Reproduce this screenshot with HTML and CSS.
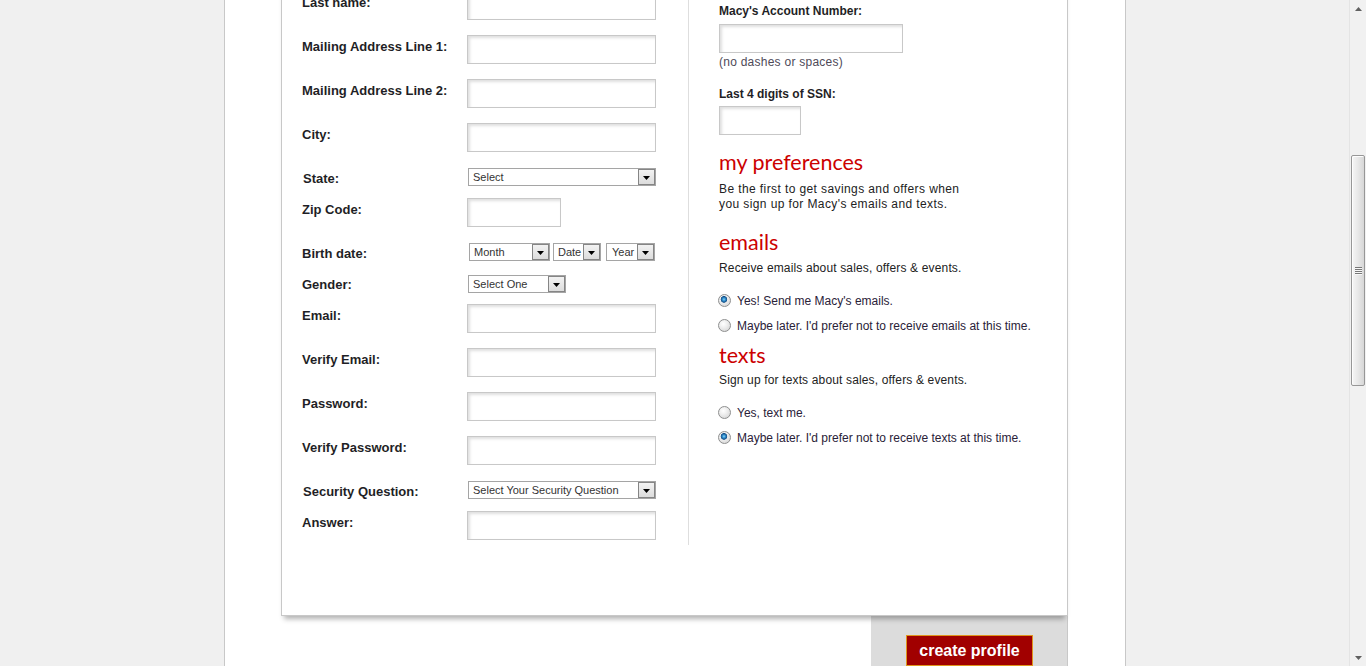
FILE: index.html
```html
<!DOCTYPE html>
<html lang="en">
<head>
<meta charset="utf-8">
<title>Create Profile</title>
<link rel="stylesheet" href="styles.css">
</head>
<body>
<div class="screen">
  <div class="viewport">
    <div class="page">
      <div class="card">
        <div class="col-left">
          <div class="row"><label class="lbl">First name:</label><input class="field" type="text"></div>
          <div class="row mt15"><label class="lbl">Last name:</label><input class="field" type="text"></div>
          <div class="row mt15"><label class="lbl">Mailing Address Line 1:</label><input class="field" type="text"></div>
          <div class="row mt15"><label class="lbl">Mailing Address Line 2:</label><input class="field" type="text"></div>
          <div class="row mt15"><label class="lbl">City:</label><input class="field" type="text"></div>
          <div class="row mt16"><label class="lbl lbl-sel lbl-in">State:</label>
            <div class="sel sel-state"><span class="sel-text">Select</span><span class="sel-arrow"><svg width="7" height="4" viewBox="0 0 7 4"><polygon points="0,0 7,0 3.5,4" fill="#000"/></svg></span></div>
          </div>
          <div class="row mt12"><label class="lbl">Zip Code:</label><input class="field field-zip" type="text"></div>
          <div class="row mt16"><label class="lbl lbl-sel">Birth date:</label>
            <div class="sel sel-month"><span class="sel-text">Month</span><span class="sel-arrow"><svg width="7" height="4" viewBox="0 0 7 4"><polygon points="0,0 7,0 3.5,4" fill="#000"/></svg></span></div>
            <div class="sel sel-date"><span class="sel-text">Date</span><span class="sel-arrow"><svg width="7" height="4" viewBox="0 0 7 4"><polygon points="0,0 7,0 3.5,4" fill="#000"/></svg></span></div>
            <div class="sel sel-year"><span class="sel-text">Year</span><span class="sel-arrow"><svg width="7" height="4" viewBox="0 0 7 4"><polygon points="0,0 7,0 3.5,4" fill="#000"/></svg></span></div>
          </div>
          <div class="row mt14"><label class="lbl lbl-sel lbl-gender">Gender:</label>
            <div class="sel sel-gender"><span class="sel-text">Select One</span><span class="sel-arrow"><svg width="7" height="4" viewBox="0 0 7 4"><polygon points="0,0 7,0 3.5,4" fill="#000"/></svg></span></div>
          </div>
          <div class="row mt11"><label class="lbl">Email:</label><input class="field" type="text"></div>
          <div class="row mt15"><label class="lbl">Verify Email:</label><input class="field" type="text"></div>
          <div class="row mt15"><label class="lbl">Password:</label><input class="field" type="password"></div>
          <div class="row mt15"><label class="lbl">Verify Password:</label><input class="field" type="password"></div>
          <div class="row mt16"><label class="lbl lbl-sel lbl-in">Security Question:</label>
            <div class="sel sel-state"><span class="sel-text">Select Your Security Question</span><span class="sel-arrow"><svg width="7" height="4" viewBox="0 0 7 4"><polygon points="0,0 7,0 3.5,4" fill="#000"/></svg></span></div>
          </div>
          <div class="row mt12"><label class="lbl">Answer:</label><input class="field" type="text"></div>
        </div>
        <div class="col-right">
          <div class="rlbl">Macy's Account Number:</div>
          <input class="field field-acct mt5" type="text">
          <div class="hint mt2">(no dashes or spaces)</div>
          <div class="rlbl mt17">Last 4 digits of SSN:</div>
          <input class="field field-ssn mt4" type="text">
          <h2 class="pref-h mt15">my preferences</h2>
          <p class="pref-p pref-intro mt8">Be the first to get savings and offers when<br>you sign up for Macy's emails and texts.</p>
          <h2 class="pref-h mt18">emails</h2>
          <p class="pref-p mt7">Receive emails about sales, offers &amp; events.</p>
          <label class="radio-row mt18"><input type="radio" name="em" checked><span>Yes! Send me Macy's emails.</span></label>
          <label class="radio-row mt10"><input type="radio" name="em"><span>Maybe later. I'd prefer not to receive emails at this time.</span></label>
          <h2 class="pref-h mt9">texts</h2>
          <p class="pref-p mt6">Sign up for texts about sales, offers &amp; events.</p>
          <label class="radio-row mt18"><input type="radio" name="tx"><span>Yes, text me.</span></label>
          <label class="radio-row mt10"><input type="radio" name="tx" checked><span>Maybe later. I'd prefer not to receive texts at this time.</span></label>
        </div>
      </div>
      <div class="actions">
        <div class="panel"><button class="btn" type="button">create profile</button></div>
      </div>
    </div>
  </div>
  <div class="scrollbar">
    <div class="sb-btn"><svg width="7" height="4" viewBox="0 0 7 4"><polygon points="0,4 7,4 3.5,0" fill="#606060"/></svg></div>
    <div class="sb-thumb"><span class="grip"><i></i><i></i><i></i><i></i></span></div>
    <div class="sb-btn sb-down"><svg width="7" height="4" viewBox="0 0 7 4"><polygon points="0,0 7,0 3.5,4" fill="#606060"/></svg></div>
  </div>
</div>
</body>
</html>
```
FILE: styles.css
```css
* { box-sizing: border-box; }

body {
  margin: 0;
  background: #f0f0f0;
  font-family: "Liberation Sans", Arial, sans-serif;
  color: #222;
}

.screen {
  display: flex;
  height: 666px;
  overflow: hidden;
}

.viewport {
  flex: 1;
  overflow: hidden;
}

.page {
  width: 902px;
  height: 666px;
  margin-left: 224px;
  background: #fff;
  border-left: 1px solid #c8c8c8;
  border-right: 1px solid #c8c8c8;
  display: flex;
  flex-direction: column;
}

.card {
  flex-shrink: 0;
  margin-top: -70px;
  margin-left: 56px;
  width: 787px;
  display: flex;
  background: #fff;
  border: 1px solid #c8c8c8;
  border-top: 0;
  padding-bottom: 70px;
  box-shadow: 0 6px 5px -3px rgba(0, 0, 0, 0.3);
  position: relative;
  z-index: 1;
}

/* left column */
.col-left {
  width: 407px;
  padding: 17px 0 5px 20px;
  border-right: 1px solid #dedede;
}

.row {
  display: flex;
  align-items: flex-start;
}

.lbl {
  width: 165px;
  flex-shrink: 0;
  padding-top: 4px;
  font-size: 13px;
  line-height: 15px;
  font-weight: bold;
  color: #1f1f26;
}

.lbl-sel { padding-top: 3px; }
.lbl-in { padding-left: 1px; }
.lbl-gender { padding-top: 2px; }

.field {
  display: block;
  margin: 0;
  width: 189px;
  height: 29px;
  border: 1px solid #c8c8c8;
  background: #fff;
  box-shadow: inset 2px 2px 3px rgba(0, 0, 0, 0.13);
  font: 12px "Liberation Sans", Arial, sans-serif;
  padding: 0 4px;
  outline: none;
}

.field-zip { width: 94px; }
.field-acct { width: 184px; }
.field-ssn { width: 82px; }

/* select boxes */
.sel {
  display: flex;
  height: 18px;
  border: 1px solid #a5a5a5;
  background: #fff;
  font-size: 11px;
  line-height: 16px;
  color: #333;
}

.sel-text {
  flex: 1;
  min-width: 0;
  padding-left: 4px;
  white-space: nowrap;
  overflow: hidden;
}

.sel-arrow {
  flex-shrink: 0;
  width: 17px;
  height: 16px;
  border: 1px solid #858585;
  background: linear-gradient(#f2f2f2, #dcdcdc);
  display: flex;
  align-items: center;
  justify-content: center;
}

.sel-arrow svg { display: block; margin-top: 1px; }

.sel-state { width: 188px; margin-left: 1px; }
.sel-month { width: 81px; margin-left: 2px; }
.sel-date { width: 48px; margin-left: 3px; }
.sel-year { width: 49px; margin-left: 5px; }
.sel-year .sel-text { padding-left: 5px; padding-right: 2px; }
.sel-gender { width: 98px; margin-left: 1px; }

/* right column */
.col-right {
  width: 378px;
  padding: 74px 0 0 30px;
  display: flex;
  flex-direction: column;
  align-items: flex-start;
}

.rlbl {
  font-size: 12px;
  line-height: 15px;
  font-weight: bold;
  color: #1f1f26;
}

.hint {
  font-size: 12px;
  line-height: 15px;
  letter-spacing: 0.25px;
  color: #4e4a58;
}

.pref-h {
  margin: 0;
  font-family: Lato, "Open Sans", sans-serif;
  font-weight: normal;
  font-size: 21.5px;
  line-height: 24px;
  color: #cc0000;
}

.pref-p {
  margin: 0;
  font-size: 12px;
  line-height: 15px;
  letter-spacing: 0.15px;
  color: #222;
}

.pref-intro { letter-spacing: 0.4px; }

.radio-row {
  display: flex;
  align-items: flex-start;
  font-size: 12px;
  line-height: 15px;
  letter-spacing: 0;
  color: #2a2238;
}

.radio-row input {
  appearance: none;
  -webkit-appearance: none;
  flex-shrink: 0;
  width: 13px;
  height: 13px;
  margin: 0 6px 0 -1px;
  border: 1px solid #8e8f8f;
  border-radius: 50%;
  background: radial-gradient(circle at 40% 35%, #ffffff 0, #f0f0f0 35%, #cfcfcf 100%);
}

.radio-row input:checked {
  background:
    radial-gradient(circle at 45% 40%, #8fd6f5 0, #2f8fcf 1.5px, #174f86 3px, rgba(23, 79, 134, 0) 3.6px),
    radial-gradient(circle at 40% 35%, #ffffff 0, #f0f0f0 35%, #cfcfcf 100%);
}

/* bottom action panel */
.actions {
  flex: 1;
  margin-left: 56px;
  width: 787px;
  display: flex;
  justify-content: flex-end;
}

.panel {
  width: 197px;
  background: #dcdcdc;
  border-right: 1px solid #c8c8c8;
  padding: 19px 0 0 35px;
}

.btn {
  display: block;
  width: 127px;
  height: 31px;
  padding: 0;
  border: 1px solid #e0961c;
  background: #a10000;
  color: #fff;
  font: bold 16px/29px "Liberation Sans", Arial, sans-serif;
  text-align: center;
}

/* fake browser scrollbar */
.scrollbar {
  width: 17px;
  flex-shrink: 0;
  background: #f1f1f1;
  border-left: 1px solid #e4e4e4;
  display: flex;
  flex-direction: column;
  align-items: center;
}

.sb-btn {
  height: 17px;
  width: 16px;
  display: flex;
  align-items: center;
  justify-content: center;
  flex-shrink: 0;
}

.sb-btn svg { display: block; }

.sb-down { margin-top: auto; }

.sb-thumb {
  margin-top: 138px;
  width: 14px;
  height: 231px;
  border: 1px solid #979797;
  border-radius: 2px;
  background: linear-gradient(to right, #f6f6f6 0, #e9e9e9 45%, #d7d7d7 100%);
  box-shadow: inset 1px 1px 0 #fdfdfd;
  display: flex;
  align-items: center;
  justify-content: center;
}

.grip {
  display: flex;
  flex-direction: column;
  gap: 1px;
}

.grip i {
  display: block;
  width: 7px;
  height: 1px;
  background: #777;
  box-shadow: 0 1px 0 #f8f8f8;
}

/* spacing utilities (kept last so they win over component margins) */
.mt2 { margin-top: 2px; }
.mt4 { margin-top: 4px; }
.mt5 { margin-top: 5px; }
.mt6 { margin-top: 6px; }
.mt7 { margin-top: 7px; }
.mt8 { margin-top: 8px; }
.mt9 { margin-top: 9px; }
.mt10 { margin-top: 10px; }
.mt11 { margin-top: 11px; }
.mt12 { margin-top: 12px; }
.mt14 { margin-top: 14px; }
.mt15 { margin-top: 15px; }
.mt16 { margin-top: 16px; }
.mt17 { margin-top: 17px; }
.mt18 { margin-top: 18px; }
```
